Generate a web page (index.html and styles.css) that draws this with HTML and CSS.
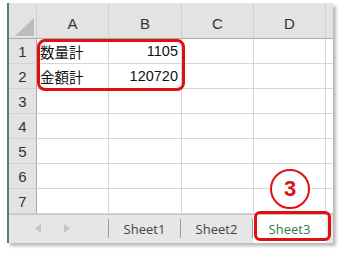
FILE: index.html
```html
<!DOCTYPE html>
<html lang="ja">
<head>
<meta charset="utf-8">
<link rel="stylesheet" href="styles.css">
</head>
<body>
<div class="frame">
  <div class="grid">
    <div class="corner"><svg width="19" height="18" viewBox="0 0 19 18"><polygon points="19,0 19,18 0,18" fill="#bcbcbc"/></svg></div>
    <div class="colhead">A</div>
    <div class="colhead">B</div>
    <div class="colhead">C</div>
    <div class="colhead">D</div>
    <div class="colhead last"></div>

    <div class="rowhead">1</div>
    <div class="cell">数量計</div>
    <div class="cell num">1105</div>
    <div class="cell"></div>
    <div class="cell"></div>
    <div class="cell last"></div>

    <div class="rowhead">2</div>
    <div class="cell">金額計</div>
    <div class="cell num">120720</div>
    <div class="cell"></div>
    <div class="cell"></div>
    <div class="cell last"></div>

    <div class="rowhead">3</div>
    <div class="cell"></div><div class="cell"></div><div class="cell"></div><div class="cell"></div><div class="cell last"></div>
    <div class="rowhead">4</div>
    <div class="cell"></div><div class="cell"></div><div class="cell"></div><div class="cell"></div><div class="cell last"></div>
    <div class="rowhead">5</div>
    <div class="cell"></div><div class="cell"></div><div class="cell"></div><div class="cell"></div><div class="cell last"></div>
    <div class="rowhead">6</div>
    <div class="cell"></div><div class="cell"></div><div class="cell"></div><div class="cell"></div><div class="cell last"></div>
    <div class="rowhead">7</div>
    <div class="cell"></div><div class="cell"></div><div class="cell"></div><div class="cell"></div><div class="cell last"></div>
  </div>
  <div class="tabbar">
    <div class="nav">
      <svg width="6" height="9" viewBox="0 0 6 9"><polygon points="6,0 6,9 0,4.5" fill="#c4c4c4"/></svg>
      <svg width="6" height="9" viewBox="0 0 6 9"><polygon points="0,0 0,9 6,4.5" fill="#c4c4c4"/></svg>
    </div>
    <div class="tab">Sheet1</div>
    <div class="tab">Sheet2</div>
    <div class="tab active">Sheet3</div>
  </div>
  <div class="mark mark-range"></div>
  <div class="mark mark-tab"></div>
  <div class="badge">3</div>
</div>
</body>
</html>
```
FILE: styles.css
```css
html, body {
  margin: 0;
  padding: 0;
  background: #ffffff;
}
body {
  width: 343px;
  height: 257px;
  overflow: hidden;
}
.frame {
  position: relative;
  margin: 3px 0 0 7px;
  width: 324px;
  border-left: 2px solid #5d7d68;
  box-shadow: 3px 3px 3px rgba(0, 0, 0, 0.28);
  background: #ffffff;
}
.grid {
  display: grid;
  grid-template-columns: 28px 72px 73px 72px 72px 7px;
  grid-template-rows: 36px repeat(7, 25px);
  font-family: "Liberation Sans", "Noto Sans CJK JP", sans-serif;
}
.corner {
  background: #e3e3e3;
  border-bottom: 1px solid #ababab;
  border-right: 1px solid #d0d0d0;
  display: flex;
  align-items: flex-end;
  justify-content: flex-end;
  padding: 0 2px 2px 0;
}
.colhead {
  background: #e3e3e3;
  border-bottom: 1px solid #ababab;
  border-right: 1px solid #cfcfcf;
  display: flex;
  align-items: flex-end;
  justify-content: center;
  padding-bottom: 6px;
  font-size: 15px;
  color: #333333;
}
.colhead.last {
  border-right: none;
}
.rowhead {
  background: #e3e3e3;
  border-bottom: 1px solid #d2d2d2;
  border-right: 1px solid #ababab;
  display: flex;
  align-items: center;
  justify-content: center;
  font-size: 15px;
  color: #333333;
}
.cell {
  border-bottom: 1px solid #d6d6d6;
  border-right: 1px solid #d6d6d6;
  display: flex;
  align-items: center;
  padding: 0 3px;
  font-family: "Noto Sans CJK JP", sans-serif;
  font-size: 14.5px;
  color: #111111;
  white-space: nowrap;
}
.cell.num {
  justify-content: flex-end;
  font-family: "Liberation Sans", sans-serif;
  font-size: 14.5px;
}
.cell.last {
  border-right: none;
  padding: 0;
}
.tabbar {
  display: flex;
  height: 29px;
  background: #e6e6e6;
  border-top: 1px solid #c4c4c4;
  box-sizing: border-box;
  font-family: "Open Sans", sans-serif;
  font-size: 13px;
  color: #444444;
}
.nav {
  width: 100px;
  display: flex;
  align-items: center;
  padding-left: 26px;
  gap: 23px;
  box-sizing: border-box;
  border-right: 1px solid #9a9a9a;
  margin: 4px 0 5px;
}
.tab {
  width: 72px;
  display: flex;
  align-items: center;
  justify-content: center;
  border-right: 1px solid #9a9a9a;
  margin: 4px 0 5px;
  box-sizing: border-box;
}
.tab.active {
  background: #ffffff;
  color: #2e7d4a;
  border-right: none;
  margin: 0;
  width: 73px;
}
.mark {
  position: absolute;
  border: 3px solid #e01010;
  box-sizing: border-box;
}
.mark-range {
  left: 28px;
  top: 36px;
  width: 148px;
  height: 52px;
  border-radius: 8px;
}
.mark-tab {
  left: 245px;
  top: 208px;
  width: 77px;
  height: 30px;
  border-radius: 6px;
}
.badge {
  position: absolute;
  left: 261px;
  top: 166px;
  width: 40px;
  height: 40px;
  box-sizing: border-box;
  border: 2.5px solid #e01010;
  border-radius: 50%;
  background: #ffffff;
  display: flex;
  align-items: center;
  justify-content: center;
  font-family: "Liberation Sans", sans-serif;
  font-weight: bold;
  font-size: 22px;
  color: #e01010;
}
```
